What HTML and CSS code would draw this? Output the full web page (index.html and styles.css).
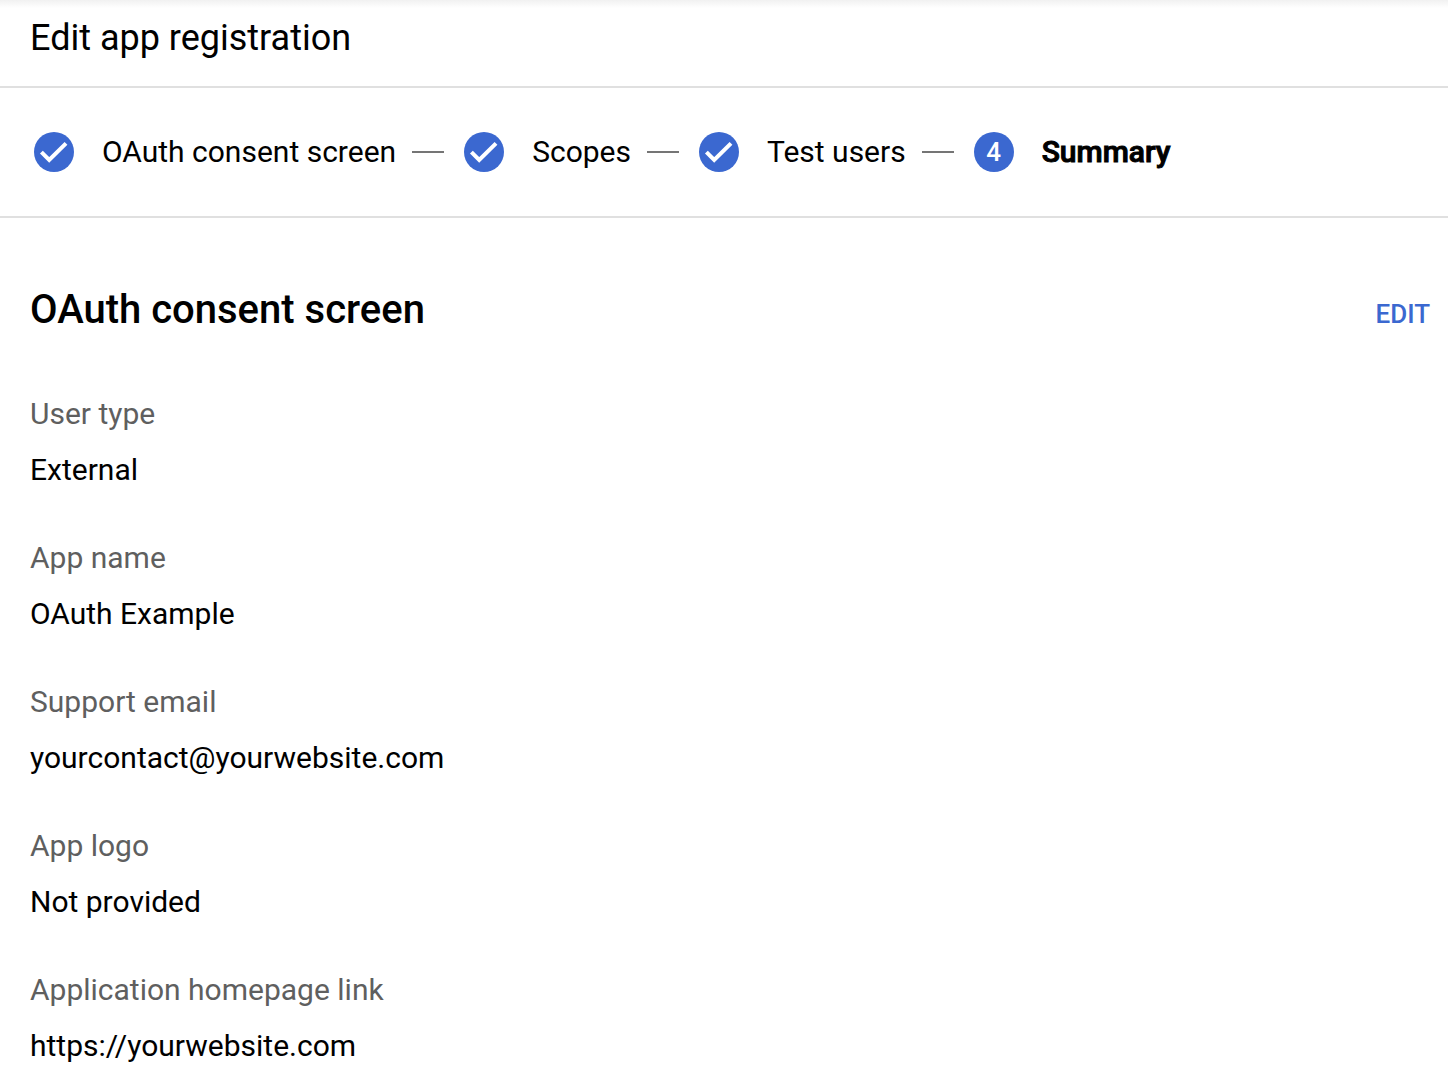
FILE: index.html
```html
<!DOCTYPE html>
<html lang="en">
<head>
<meta charset="utf-8">
<meta name="viewport" content="width=device-width, initial-scale=1">
<title>Edit app registration</title>
<link rel="stylesheet" href="styles.css">
</head>
<body>
<header class="page-header">
  <h1 class="page-title">Edit app registration</h1>
</header>
<nav class="stepper" aria-label="Registration steps">
  <ol class="steps">
    <li class="step">
      <svg class="step-badge" viewBox="0 0 40 40" aria-hidden="true"><path class="check" d="M7.4 20.2 15.2 28 32 11.3"/></svg>
      <span class="step-label">OAuth consent screen</span>
    </li>
    <li class="step">
      <svg class="step-badge" viewBox="0 0 40 40" aria-hidden="true"><path class="check" d="M7.4 20.2 15.2 28 32 11.3"/></svg>
      <span class="step-label">Scopes</span>
    </li>
    <li class="step">
      <svg class="step-badge" viewBox="0 0 40 40" aria-hidden="true"><path class="check" d="M7.4 20.2 15.2 28 32 11.3"/></svg>
      <span class="step-label">Test users</span>
    </li>
    <li class="step step-current" aria-current="step">
      <span class="step-badge">4</span>
      <span class="step-label">Summary</span>
    </li>
  </ol>
</nav>
<main class="summary">
  <div class="section-head">
    <h2 class="section-title">OAuth consent screen</h2>
    <button class="edit-button" type="button">EDIT</button>
  </div>
  <dl class="fields">
    <div class="field"><dt>User type</dt><dd>External</dd></div>
    <div class="field"><dt>App name</dt><dd>OAuth Example</dd></div>
    <div class="field"><dt>Support email</dt><dd>yourcontact@yourwebsite.com</dd></div>
    <div class="field"><dt>App logo</dt><dd>Not provided</dd></div>
    <div class="field"><dt>Application homepage link</dt><dd>https://yourwebsite.com</dd></div>
  </dl>
</main>
</body>
</html>
```
FILE: styles.css
```css
* {
  box-sizing: border-box;
}

body {
  margin: 0;
  background: #fff;
  color: #000;
  font-family: Roboto, "Liberation Sans", sans-serif;
  font-size: 30px;
  line-height: 40px;
}

.page-header {
  padding: 18px 30px 28px;
  border-bottom: 2px solid #e0e0e0;
  background: linear-gradient(#f1f1f1, #fff 8px);
}

.page-title {
  margin: 0;
  font-size: 36px;
  font-weight: 400;
}

.stepper {
  padding: 44px 34px;
  border-bottom: 2px solid #e0e0e0;
}

.steps {
  display: flex;
  margin: 0;
  padding: 0;
  list-style: none;
}

.step {
  display: flex;
  align-items: center;
  white-space: nowrap;
}

.step:not(:last-child)::after {
  content: "";
  width: 32px;
  height: 2px;
  margin: 0 20px 0 16px;
  background: #757575;
}

.step-badge {
  flex: none;
  width: 40px;
  height: 40px;
  margin-right: 28px;
  border-radius: 50%;
  background: #3b68d0;
  color: #fff;
  font-size: 26px;
  font-weight: 500;
  text-align: center;
}

.check {
  fill: none;
  stroke: #fff;
  stroke-width: 4;
}

.step-current .step-label {
  font-weight: 500;
  -webkit-text-stroke: 1px #000;
}

.summary {
  padding: 68px 18px 18px 30px;
}

.section-head {
  display: flex;
  align-items: center;
  justify-content: space-between;
  margin-bottom: 60px;
}

.section-title {
  margin: 0;
  font-size: 40px;
  font-weight: 500;
  line-height: 48px;
}

.edit-button {
  margin: 8px 0 0;
  padding: 0;
  border: 0;
  background: none;
  color: #3b68d0;
  font: 500 26px/40px Roboto, "Liberation Sans", sans-serif;
  cursor: pointer;
}

.fields {
  display: grid;
  gap: 48px;
  margin: 0;
}

.field {
  display: grid;
  gap: 16px;
}

.field dt {
  color: #5f5f5f;
}

.field dd {
  margin: 0;
}
```
